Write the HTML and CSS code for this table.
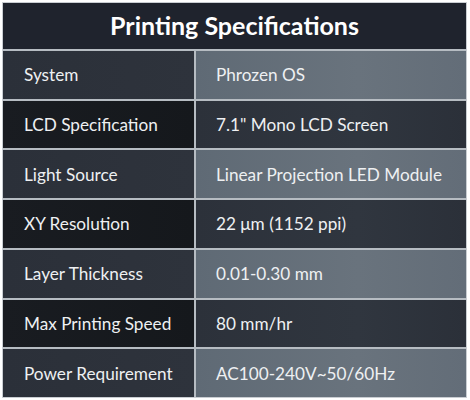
FILE: index.html
```html
<!DOCTYPE html>
<html lang="en">
<head>
<meta charset="utf-8">
<title>Printing Specifications</title>
<link rel="stylesheet" href="styles.css">
</head>
<body>
<div class="spec">
  <div class="head">Printing Specifications</div>
  <div class="cell key odd">System</div>
  <div class="cell val odd">Phrozen OS</div>
  <div class="cell key even">LCD Specification</div>
  <div class="cell val even">7.1" Mono LCD Screen</div>
  <div class="cell key odd">Light Source</div>
  <div class="cell val odd">Linear Projection LED Module</div>
  <div class="cell key even">XY Resolution</div>
  <div class="cell val even">22 μm (1152 ppi)</div>
  <div class="cell key odd">Layer Thickness</div>
  <div class="cell val odd">0.01-0.30 mm</div>
  <div class="cell key even">Max Printing Speed</div>
  <div class="cell val even">80 mm/hr</div>
  <div class="cell key odd">Power Requirement</div>
  <div class="cell val odd">AC100-240V~50/60Hz</div>
</div>
</body>
</html>
```
FILE: styles.css
```css
html, body {
  margin: 0;
  padding: 0;
  background: #ffffff;
}
body {
  font-family: Lato, "Open Sans", sans-serif;
}
.spec {
  box-sizing: border-box;
  margin: 2px;
  width: 465px;
  height: 396px;
  border: 1px solid #c9cdd2;
  background: #b6bcc2;
  display: grid;
  grid-template-columns: 191px 1fr;
  grid-template-rows: 46px repeat(7, 1fr);
  gap: 2px;
}
.head {
  grid-column: 1 / -1;
  background: #1f232d;
  color: #ffffff;
  font-weight: 700;
  font-size: 25px;
  padding-bottom: 3px;
  display: flex;
  align-items: center;
  justify-content: center;
}
.cell {
  display: flex;
  align-items: center;
  color: #eef0f2;
  font-size: 17.2px;
}
.key {
  padding-left: 21px;
}
.val {
  padding-left: 20px;
}
.key.odd {
  background: linear-gradient(90deg, #2b3039, #2e333c);
}
.val.odd {
  background: linear-gradient(90deg, #5f6a75, #69737d 60%, #636d78);
}
.key.even {
  background: linear-gradient(90deg, #191c21, #15181c);
}
.val.even {
  background: linear-gradient(90deg, #2c313a, #30363f 60%, #2b3039);
}
```
